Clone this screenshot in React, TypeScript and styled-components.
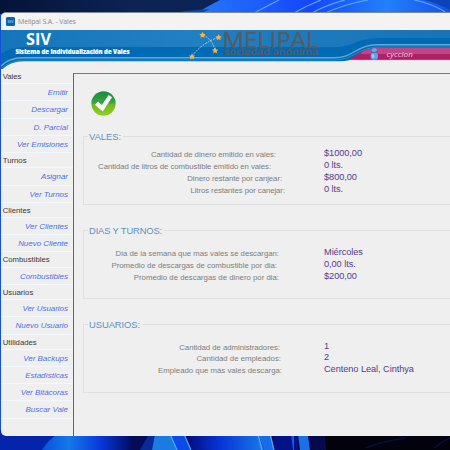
import React from "react";
import styled, { createGlobalStyle } from "styled-components";

const Global = createGlobalStyle`
  *{box-sizing:border-box}
  html,body{margin:0;padding:0;overflow:hidden}
  body{font-family:"Liberation Sans",Arial,sans-serif}
`;
const Desktop = styled.div`
  position: relative; width: 450px; height: 450px; overflow: hidden; background: #1550d2;
  padding: 12px 0 0 1px;
`;
const Wallpaper = styled.svg` position: absolute; left: 0; top: 0; `;
const Win = styled.main`
  position: relative; width: 460px; height: 424px; display: flex; flex-direction: column;
  background: #efefef; border-top: 1px solid #81858f; border-radius: 5px; overflow: hidden;
`;
const TitleBar = styled.header`
  height: 17px; flex: none; background: #f3f3f3; display: flex; align-items: center; gap: 3px; padding-left: 5px;
`;
const AppIcon = styled.div`
  width: 9px; height: 9px; border-radius: 1.5px; background: #0d62ae; color: #7fbce8;
  font: 700 4px/9px "Open Sans", sans-serif; text-align: center; margin-bottom: 1px;
`;
const Title = styled.span`
  font: 7px/16px "Open Sans", sans-serif; letter-spacing: -0.14px; color: #8a8a8a; white-space: nowrap;
`;
const Banner = styled.svg` display: block; flex: none; `;
const Body = styled.div` flex: 1; display: flex; min-height: 0; `;
const Sidebar = styled.nav` width: 72px; flex: none; `;
const Heading = styled.div`
  height: 15.3px; padding-left: 1.7px; font-size: 7.75px; line-height: 16.8px; color: #383838;
  border-bottom: 1px solid #f4f9fe;
`;
const Item = styled.a`
  display: block; height: 17.2px; line-height: 17.4px; padding-right: 5px; text-align: right;
  font-size: 8px; letter-spacing: -0.03px; font-style: italic; color: #4d6fe6;
  border-bottom: 1px solid #f2f8ff; white-space: nowrap;
`;
const Content = styled.section`
  flex: 1; margin-top: 4px; border-left: 1px solid #666; border-top: 1px solid #777; padding: 16px 0 0 9px;
`;
const Check = styled.svg` display: block; margin-left: 7px; `;
const Group = styled.fieldset<{ $top: number }>`
  margin: ${p => p.$top}px 0 0; border: 1px solid #dfdfdf; padding: 0; height: 74px; width: 390px; min-width: 0;
`;
const Legend = styled.legend<{ $track: number }>`
  margin-left: 4px; padding: 0 2px 0 1px; font-size: 9.4px; line-height: 11px; color: #5c8fc0;
  letter-spacing: ${p => p.$track}px;
`;
const Row = styled.div` display: flex; height: 11.9px; `;
const Rows = styled.div<{ $pad: number }>` padding-top: ${p => p.$pad}px; `;
const Label = styled.span<{ $end: number; $track: number }>`
  width: 240px; flex: none; padding-right: ${p => 324 - p.$end}px; text-align: right; white-space: nowrap;
  font-size: 7.8px; line-height: 14px; color: #7d7d7d; letter-spacing: ${p => p.$track}px;
`;
const Value = styled.span`
  font-size: 9.25px; line-height: 11px; color: #563c8c; white-space: nowrap; letter-spacing: -0.08px;
`;

const menu: [string, string[]][] = [
  ["Vales", ["Emitir", "Descargar", "D. Parcial", "Ver Emisiones"]],
  ["Turnos", ["Asignar", "Ver Turnos"]],
  ["Clientes", ["Ver Clientes", "Nuevo Cliente"]],
  ["Combustibles", ["Combustibles"]],
  ["Usuarios", ["Ver Usuarios", "Nuevo Usuario"]],
  ["Utilidades", ["Ver Backups", "Estadísticas", "Ver Bitácoras", "Buscar Vale"]],
];
type Entry = [string, string, number, number];
const groups: { title: string; track: number; top: number; pad: number; rows: Entry[] }[] = [
  { title: "VALES:", track: 0, top: 14, pad: 6.4, rows: [
    ["Cantidad de dinero emitido en vales:", "$1000,00", 276, -0.04],
    ["Cantidad de litros de combustible emitido en vales:", "0 lts.", 271, -0.06],
    ["Dinero restante por canjear:", "$800,00", 282, -0.07],
    ["Litros restantes por canejar:", "0 lts.", 285, -0.07]] },
  { title: "DIAS Y TURNOS:", track: -0.14, top: 20, pad: 11, rows: [
    ["Dia de la semana que mas vales se descargan:", "Miércoles", 279, -0.02],
    ["Promedio de descargas de combustible por dia:", "0,00 lts.", 277, 0.01],
    ["Promedio de descargas de dinero por dia:", "$200,00", 279, 0]] },
  { title: "USUARIOS:", track: -0.05, top: 20, pad: 10.5, rows: [
    ["Cantidad de administradores:", "1", 280, -0.04],
    ["Cantidad de empleados:", "2", 281, 0],
    ["Empleado que más vales descarga:", "Centeno Leal, Cinthya", 282, 0]] },
];
const star = "M0-3.2L1-1L3.2-.9L1.5.7L2 3L0 1.8L-2 3L-1.5.7L-3.2-.9L-1-1Z";

export default function App() {
  return (
    <Desktop>
      <Global />
      <Wallpaper width="450" height="450">
        <defs>
          <linearGradient id="sky"><stop stopColor="#031437" /><stop offset=".3" stopColor="#0c2454" /><stop offset="1" stopColor="#06245e" /></linearGradient>
          <linearGradient id="petal"><stop stopColor="#2479fb" /><stop offset=".45" stopColor="#1646fb" /><stop offset=".75" stopColor="#2380fa" /><stop offset="1" stopColor="#1650ed" /></linearGradient>
          <linearGradient id="leaf"><stop stopColor="#0a50dd" /><stop offset=".3" stopColor="#1479e6" /><stop offset=".65" stopColor="#0838dc" /><stop offset="1" stopColor="#020c60" /></linearGradient>
          <linearGradient id="blade"><stop stopColor="#020a76" /><stop offset=".45" stopColor="#0735d8" /><stop offset="1" stopColor="#1a78e8" /></linearGradient>
        </defs>
        <rect width="450" height="14" fill="url(#sky)" />
        <path d="M195 14Q210 5 220 0H437Q444 5 450 9V14Z" fill="url(#petal)" />
        <path d="M165 14Q188 10 210 9L200 14ZM424 0H450V10Q437 3 424 0Z" fill="#0b45b9" />
        <path d="M252 14L279 0M292 14Q306 6 321 0M310 14Q326 5 345 0M323 14Q345 4 368 0M414 0Q434 4 448 14" fill="none" stroke="#59a8ff" strokeWidth="1.2" />
        <rect y="430" width="450" height="20" fill="#030c55" />
        <rect y="430" width="60" height="20" fill="#0524ac" />
        <path d="M42 450Q49 439 58 434H132V450Z" fill="url(#leaf)" />
        <path d="M140 450L149 434H155L152 450Z" fill="#0a2a98" />
        <path d="M152 450L155 434H172L177 450Z" fill="#1a7be2" />
        <path d="M170 434L177 450H191L184 434Z" fill="#0b4be8" />
        <path d="M170 434L177 450M184 434L191 450" stroke="#52a2f8" strokeWidth="1.3" />
        <path d="M185 434L192 450H264L258 434Z" fill="url(#blade)" />
        <path d="M258 434L264 450H274L271 434Z" fill="#176de8" />
        <path d="M258 434L262 450M270 434L274 450" stroke="#56a5ff" strokeWidth="1.2" />
        <path d="M274 434H298V450H275Z" fill="#03128a" />
        <path d="M291 434H294V450H293Z" fill="#1456f0" />
        <path d="M298 434H308L310 450H300Z" fill="#1b70e8" />
        <path d="M308 434H325V450H310Z" fill="#020b4b" />
        <path d="M325 434H450V450H326Z" fill="#01020c" />
        <path d="M365 448Q385 441 405 438M435 448Q441 442 450 438" fill="none" stroke="#061040" strokeWidth="1.5" />
      </Wallpaper>
      <Win>
        <TitleBar><AppIcon>SIV</AppIcon><Title>Melipal S.A. - Vales</Title></TitleBar>
        <Banner width="459" height="39" viewBox="1 30 459 39">
          <defs><linearGradient id="band"><stop stopColor="#1575bb" /><stop offset=".4" stopColor="#2080c1" /><stop offset="1" stopColor="#1873b7" /></linearGradient></defs>
          <path d="M98 59H111Q106 68 99 78H90Q97 68 98 59Z" fill="#f1ece7" />
          <path d="M1 30H460V60H350Q344 61.5 336 61.2H24Q9 61 1 71Z" fill="#006bb4" />
          <path d="M1 30H460V38H382C355 38 354 47 336 47H24Q10 47 1 54Z" fill="url(#band)" />
          <path d="M349 60C356 56 360 49 378 48H460V60Z" fill="#af2069" />
          <path d="M361 53Q367 48 378 48H460V54H361Z" fill="#bf4784" />
          <path d="M1 66Q9 57.8 23 57.8H334C354 57.8 356 44.7 378 44.7H460" fill="none" stroke="#64a9d7" strokeWidth="1.4" />
          <path d="M1 69.5Q10 60 24 60H334C354 60 358 47 380 47H460" fill="none" stroke="#238bca" strokeWidth="1" />
          <path d="M350 60.2H460" stroke="#e6c8d8" strokeWidth=".6" />
          <g fontFamily="Open Sans, sans-serif" fontWeight="800" fill="#fff">
            <text x="26" y="45.4" fontSize="16.2" fontWeight="700" textLength="25" lengthAdjust="spacingAndGlyphs">SIV</text>
            <text x="15.5" y="53.8" fontSize="6.4" stroke="#fff" strokeWidth=".15" textLength="114" lengthAdjust="spacingAndGlyphs">Sistema de Individualización de Vales</text>
          </g>
          <path d="M192 56Q202 43 219 37M203 35Q212 39 215 50" fill="none" stroke="#b8d4e8" strokeWidth=".9" strokeDasharray="2 1" />
          {[[192, 56.5], [202.5, 35], [218.7, 37.3], [215.2, 50.5]].map(([x, y]) => <path key={x} d={star} transform={`translate(${x} ${y})`} fill="#f9b446" />)}
          <g fontFamily="Open Sans, sans-serif" fill="#535d68" stroke="#535d68">
            <text x="222.5" y="47.5" fontSize="21" strokeWidth=".4" textLength="96" lengthAdjust="spacingAndGlyphs">MELIPAL</text>
            <text x="224" y="55.3" fontSize="8.4" fontWeight="600" strokeWidth=".15" textLength="94" lengthAdjust="spacingAndGlyphs">sociedad anónima</text>
          </g>
          <circle cx="374.3" cy="50.5" r="2.5" fill="#65a9ed" />
          <ellipse cx="374.3" cy="56.2" rx="3.7" ry="3.6" fill="#65a3ee" />
          <path d="M371 52Q374 54 378 51" fill="none" stroke="#2a65bd" strokeWidth="1" />
          <ellipse cx="373" cy="56" rx="1.2" ry="2" fill="#9bcbfa" />
          <text x="386.5" y="56.6" fontFamily="Open Sans, sans-serif" fontSize="7.8" fontStyle="italic" fill="#ebc6db" textLength="26.5" lengthAdjust="spacingAndGlyphs">cyccion</text>
        </Banner>
        <Body>
          <Sidebar>
            {menu.map(([name, items]) => (
              <React.Fragment key={name}>
                <Heading>{name}</Heading>
                {items.map(i => <Item key={i}>{i}</Item>)}
              </React.Fragment>
            ))}
          </Sidebar>
          <Content>
            <Check width="27" height="27" viewBox="0 0 27 27">
              <defs><linearGradient id="green" x2="0" y2="1"><stop stopColor="#168d3c" /><stop offset=".46" stopColor="#38a345" /><stop offset=".55" stopColor="#72b91d" /><stop offset="1" stopColor="#8fd020" /></linearGradient></defs>
              <circle cx="13.5" cy="13.5" r="13.2" fill="#fff" stroke="#dedede" strokeWidth=".5" />
              <circle cx="13.5" cy="13.5" r="12.2" fill="url(#green)" />
              <path d="M5 14.8L8 11.6L11.8 15.2L18.6 5L22 7.3L12.8 21.4Z" fill="#fff" />
            </Check>
            {groups.map(g => (
              <Group key={g.title} $top={g.top}>
                <Legend $track={g.track}>{g.title}</Legend>
                <Rows $pad={g.pad}>
                  {g.rows.map(([l, v, end, track]) => <Row key={l}><Label $end={end} $track={track}>{l}</Label><Value>{v}</Value></Row>)}
                </Rows>
              </Group>
            ))}
          </Content>
        </Body>
      </Win>
    </Desktop>
  );
}
